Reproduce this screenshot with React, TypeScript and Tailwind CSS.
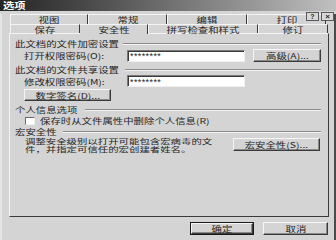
import type { ReactNode } from "react";

// Stretched text: the screenshot's glyphs are wide and short
const T = ({ children, center }: { children: ReactNode; center?: boolean }) => (
  <span
    className={
      center
        ? "inline-block whitespace-nowrap origin-center scale-x-[1.3]"
        : "inline-block whitespace-nowrap origin-left scale-x-[1.3]"
    }
  >
    {children}
  </span>
);

const Etched = () => (
  <div className="flex-1 h-0 border-t border-t-[#8c8c8c] border-b border-b-[#f4f4f4]" />
);

const Header = ({ label, w }: { label: string; w: string }) => (
  <div className="flex items-center h-[11px]">
    <div className={w}>
      <T>{label}</T>
    </div>
    <Etched />
  </div>
);

const Btn = ({ label, className }: { label: string; className: string }) => (
  <div
    className={
      "flex items-center justify-center border-t border-l border-t-[#f6f6f6] border-l-[#f6f6f6] border-b border-r border-b-[#3a3a3a] border-r-[#3a3a3a] shadow-[inset_-1px_-1px_0_#8a8a8a] " +
      className
    }
  >
    <T center>{label}</T>
  </div>
);

const PwdBox = () => (
  <div className="w-[118px] h-[12px] bg-white border-t border-l border-t-[#7a7a7a] border-l-[#7a7a7a] border-b border-r border-b-[#f2f2f2] border-r-[#f2f2f2] shadow-[inset_1px_1px_0_#3a3a3a] flex items-center pl-[2px] overflow-hidden">
    <span className="text-[9px] leading-[9px] tracking-[0.4px] font-['Liberation_Sans',sans-serif] pt-[2px]">
      ********
    </span>
  </div>
);

const Tab = ({ label, w }: { label: string; w: string }) => (
  <div
    className={
      "flex items-center justify-center border-t border-l border-t-[#f4f4f4] border-l-[#f4f4f4] border-r border-r-[#3a3a3a] " +
      w
    }
  >
    <T center>{label}</T>
  </div>
);

export default function App() {
  return (
    <div className="w-[336px] h-[240px] bg-[#d4d4d4] text-[#262626] text-[8px] leading-[11px] font-['Noto_Sans_CJK_SC',sans-serif] relative overflow-hidden">
      {/* title bar */}
      <div className="h-[11px] bg-gradient-to-r from-[#242424] via-[#707070] to-[#c0c0c0] flex items-center pl-[3px]">
        <span className="text-white font-bold text-[9px] leading-[9px] inline-block origin-left scale-x-[1.25]">
          选项
        </span>
      </div>
      <div className="absolute top-[12px] right-[2px] flex gap-[2px]">
        <div className="w-[13px] h-[9px] bg-[#d8d8d8] border border-[#5a5a5a] flex items-center justify-center text-[7px] leading-[7px] font-bold font-['Liberation_Sans',sans-serif]">
          ?
        </div>
        <div className="w-[13px] h-[9px] bg-[#d8d8d8] border border-[#5a5a5a] flex items-center justify-center text-[8px] leading-[7px] font-bold font-['Liberation_Sans',sans-serif]">
          ×
        </div>
      </div>

      <div className="h-[229px] border-l-2 border-l-[#e6e6e6] border-r-2 border-r-[#4a4a4a] border-b-2 border-b-[#4a4a4a]">
        {/* tabs */}
        <div className="flex ml-[8px] mt-[3px] h-[10px]">
          <Tab label="视图" w="w-[78px]" />
          <Tab label="常规" w="w-[79px]" />
          <Tab label="编辑" w="w-[80px]" />
          <Tab label="打印" w="w-[79px]" />
        </div>
        <div className="flex ml-[8px] h-[9px]">
          <Tab label="保存" w="w-[70px]" />
          <div className="w-[68px] flex items-center justify-center border-t border-t-[#f4f4f4] border-r border-r-[#3a3a3a] -mb-px relative bg-[#d4d4d4]">
            <T center>安全性</T>
          </div>
          <Tab label="拼写检查和样式" w="w-[110px]" />
          <Tab label="修订" w="w-[70px]" />
        </div>

        {/* panel */}
        <div className="ml-[7px] w-[320px] h-[184px] border-t border-l border-t-[#f4f4f4] border-l-[#f4f4f4] border-r border-b border-r-[#3a3a3a] border-b-[#3a3a3a] pl-[5px] pr-[7px] pt-[4px] flex flex-col">
          <Header label="此文档的文件加密设置" w="w-[108px]" />
          <div className="flex items-center h-[13px]">
            <div className="ml-[9px] w-[103px]">
              <T>打开权限密码(O):</T>
            </div>
            <PwdBox />
            <Btn label="高级(A)..." className="ml-[8px] w-[68px] h-[13px]" />
          </div>

          <div className="mt-[2px]">
            <Header label="此文档的文件共享设置" w="w-[110px]" />
          </div>
          <div className="flex items-center h-[12px]">
            <div className="ml-[9px] w-[103px]">
              <T>修改权限密码(M):</T>
            </div>
            <PwdBox />
          </div>
          <Btn label="数字签名(D)..." className="mt-[2px] ml-[9px] w-[87px] h-[12px]" />

          <div className="mt-[3px]">
            <Header label="个人信息选项" w="w-[70px]" />
          </div>
          <div className="flex items-center h-[11px]">
            <div className="ml-[10px] w-[10px] h-[8px] bg-white border-t border-l border-t-[#6a6a6a] border-l-[#6a6a6a] border-b border-r border-b-[#f2f2f2] border-r-[#f2f2f2]" />
            <div className="ml-[5px]">
              <T>保存时从文件属性中删除个人信息(R)</T>
            </div>
          </div>

          <Header label="宏安全性" w="w-[48px]" />
          <div className="flex items-start mt-[1px]">
            <div className="ml-[10px] w-[208px] text-[6.5px] leading-[7.5px]">
              <span className="block whitespace-pre origin-left scale-x-[1.6]">
                {"调整安全级别以打开可能包含宏病毒的文\n件，并指定可信任的宏创建者姓名。"}
              </span>
            </div>
            <Btn label="宏安全性(S)..." className="w-[87px] h-[13px]" />
          </div>
        </div>

        {/* dialog buttons */}
        <div className="flex justify-end gap-[9px] pr-[6px] mt-[5px]">
          <div className="w-[64px] h-[13px] border border-[#1a1a1a] flex">
            <Btn label="确定" className="flex-1" />
          </div>
          <Btn label="取消" className="w-[65px] h-[13px]" />
        </div>
      </div>
    </div>
  );
}
